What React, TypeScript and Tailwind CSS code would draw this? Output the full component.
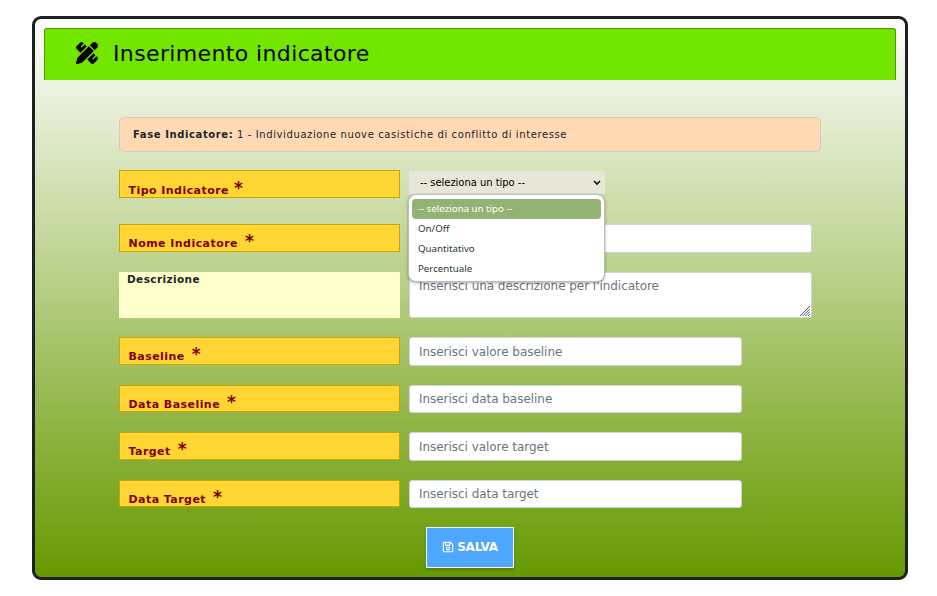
import type { ReactNode } from "react";
import { FaPenRuler } from "react-icons/fa6";
import { FaRegSave } from "react-icons/fa";

function RequiredLabel({ children, height, text, gap }: { children: ReactNode; height: string; text: string; gap: string }) {
  return (
    <div className={`${height} w-[281px] shrink-0 overflow-hidden border border-[#cca300] bg-[#ffd633] pl-[8.5px] text-[11px] font-bold tracking-[0.45px] text-[#800000]`}>
      <div className={`flex whitespace-nowrap ${text}`}>
        <span>{children}</span>
        <span className={`${gap} -mt-[3px] text-[17px] leading-[14px] tracking-normal`}>*</span>
      </div>
    </div>
  );
}

const field =
  "block rounded-[3px] border border-[#ced4da] bg-white px-[9px] text-[12px] tracking-[-0.04px] text-[#495057] outline-none placeholder:text-[#6c757d] placeholder:opacity-100";

export default function App() {
  return (
    <div className="h-[596px] w-[937px] overflow-hidden bg-white pl-[32px] pt-[16px] font-['DejaVu_Sans',sans-serif]">
      <main className="h-[564px] w-[876px] rounded-[9px] border-[3px] border-[#1d2124] bg-[linear-gradient(to_bottom,#ffffff,#669900)] px-[9px] pt-[9px]">
        <header className="flex h-[52px] items-center rounded-t-[3px] border border-b-0 border-[#4d9900] bg-[#73e600] pl-[31px] pb-px">
          <FaPenRuler size={22} color="#000" className="mb-[2px]" />
          <h1 className="ml-[15px] text-[22px] leading-[26px] tracking-[0.37px] text-black">Inserimento indicatore</h1>
        </header>

        <form className="pl-[75px]">
          <div className="mt-[37px] h-[35px] w-[702px] rounded-[5px] border border-[#cccccc] bg-[#ffd9b3] pl-[13px] text-[10px] leading-[33px] tracking-[0.6px] text-[#212529]">
            <b>Fase Indicatore:</b> 1 - Individuazione nuove casistiche di conflitto di interesse
          </div>

          <div className="mt-[18px] flex h-[28px] gap-[9px]">
            <RequiredLabel height="h-[28px]" text="pt-[13px] leading-[14px]" gap="ml-[5px]">Tipo Indicatore</RequiredLabel>
            <div className="relative mt-px h-[23px] w-[196px]">
              <div className="flex h-[23px] items-center justify-between bg-[#e8e6d9] pl-[11px] pr-[4px] text-[10px] tracking-[-0.04px] text-black">
                <span>-- seleziona un tipo --</span>
                <svg width="8" height="6" viewBox="0 0 8 6" fill="none" stroke="#111" strokeWidth="1.6"><path d="m1 1 3 3 3-3" /></svg>
              </div>
              <ul className="absolute -left-px top-[23px] z-10 h-[88px] w-[197px] rounded-[8px] border border-[#bcbcbc] bg-white px-[3px] pt-[4px] font-['Noto_Sans',sans-serif] text-[9.7px] leading-[20px] text-[#2e3436] shadow-[0_1px_3px_rgba(0,0,0,0.35)]">
                <li className="rounded-[4px] bg-[#93b374] pl-[6px] text-white">-- seleziona un tipo --</li>
                <li className="pl-[6px]">On/Off</li>
                <li className="pl-[6px]">Quantitativo</li>
                <li className="pl-[6px]">Percentuale</li>
              </ul>
            </div>
          </div>

          <div className="mt-[26px] flex gap-[9px]">
            <RequiredLabel height="h-[28px]" text="pt-[12px] leading-[14px]" gap="ml-[7px]">Nome Indicatore</RequiredLabel>
            <input className={`${field} h-[29px] w-[403px]`} />
          </div>

          <div className="mt-[19px] flex h-[46px] gap-[9px]">
            <div className="w-[281px] bg-[#ffffcc] pl-[8px] text-[10.5px] font-bold leading-[14px] tracking-[0.4px] text-[#212529]">Descrizione</div>
            <div className="relative">
              <textarea className={`${field} h-[46px] w-[403px] resize-none py-[4px] leading-[18px]`} placeholder="Inserisci una descrizione per l'indicatore" />
              <svg className="absolute bottom-[2px] right-[2px]" width="10" height="10" viewBox="0 0 10 10" stroke="#555" strokeWidth="1">
                <path d="M0 10 10 0M2.7 10 10 2.7M5.4 10 10 5.4M8 10l2-2" />
              </svg>
            </div>
          </div>

          <div className="mt-[19px] flex h-[29px] gap-[9px]">
            <RequiredLabel height="h-[28px]" text="pt-[12px] leading-[14px]" gap="ml-[7px]">Baseline</RequiredLabel>
            <input className={`${field} h-[29px] w-[333px]`} placeholder="Inserisci valore baseline" />
          </div>
          <div className="mt-[19px] flex h-[28px] gap-[9px]">
            <RequiredLabel height="h-[27px]" text="pt-[12px] leading-[14px]" gap="ml-[7px]">Data Baseline</RequiredLabel>
            <input className={`${field} h-[28px] w-[333px]`} placeholder="Inserisci data baseline" />
          </div>
          <div className="mt-[19px] flex h-[29px] gap-[9px]">
            <RequiredLabel height="h-[28px]" text="pt-[12px] leading-[14px]" gap="ml-[7px]">Target</RequiredLabel>
            <input className={`${field} h-[29px] w-[333px]`} placeholder="Inserisci valore target" />
          </div>
          <div className="mt-[19px] flex h-[28px] gap-[9px]">
            <RequiredLabel height="h-[27px]" text="pt-[12px] leading-[14px]" gap="ml-[7px]">Data Target</RequiredLabel>
            <input className={`${field} h-[28px] w-[333px]`} placeholder="Inserisci data target" />
          </div>

          <button type="button" className="ml-[307px] mt-[19px] flex h-[41px] w-[88px] items-center justify-center border border-white bg-[#4da6ff] pb-[2px] text-[12px] font-bold tracking-[-0.2px] text-white shadow-[0_2px_3px_rgba(0,0,0,0.2)]">
            <FaRegSave size={12} className="mr-[3px]" />
            SALVA
          </button>
        </form>
      </main>
    </div>
  );
}
